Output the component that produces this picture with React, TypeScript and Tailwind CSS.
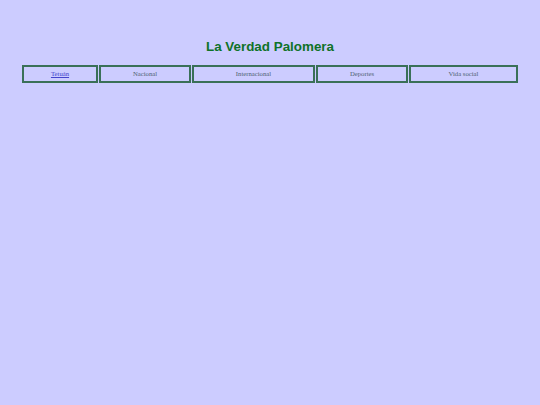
import React from 'react';

const items = [
  { label: 'Tetuán', w: 'w-[76px]', link: true },
  { label: 'Nacional', w: 'w-[92px]' },
  { label: 'Internacional', w: 'w-[123px]' },
  { label: 'Deportes', w: 'w-[92px]' },
  { label: 'Vida social', w: 'w-[109px]' },
];

export default function App() {
  return (
    <div className="min-h-[405px] w-full bg-[#ccccff] pt-[39px]">
      <h1 className="text-center text-[13.4px] font-bold leading-[16px] text-[#0f7228] [font-family:'Liberation_Sans',Arial,sans-serif]">
        La Verdad Palomera
      </h1>
      <nav className="ml-[22px] mt-[10px] flex gap-[1px]">
        {items.map((it) => (
          <div
            key={it.label}
            className={`${it.w} flex h-[18px] items-center justify-center border-2 border-[#3a7058] text-[6.7px] [font-family:'Liberation_Serif','Times_New_Roman',serif]`}>
            {it.link ? (
              <a href="#" className="text-[#4444cc] underline">
                {it.label}
              </a>
            ) : (
              <span className="text-[#4f6272]">{it.label}</span>
            )}
          </div>
        ))}
      </nav>
    </div>
  );
}
